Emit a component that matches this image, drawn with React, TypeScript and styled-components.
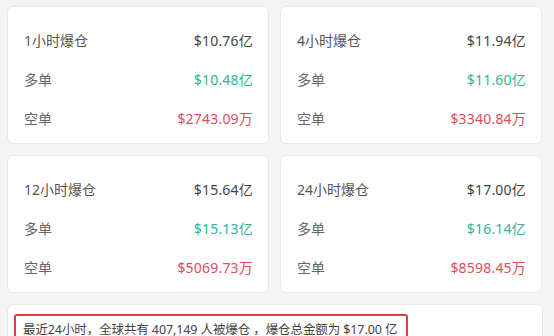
import styled, { createGlobalStyle } from 'styled-components'

const GlobalStyle = createGlobalStyle`
  html, body {
    margin: 0;
    padding: 0;
    background: #f4f4f5;
  }
  body {
    font-family: "Noto Sans", "Noto Sans CJK SC", sans-serif;
  }
`

const Page = styled.main`
  width: 554px;
  height: 336px;
  overflow: hidden;
  box-sizing: border-box;
  padding: 6px 11px 0 7px;
  display: flex;
  flex-direction: column;
  gap: 11px;
`

const Grid = styled.div`
  display: grid;
  grid-template-columns: 262px 262px;
  column-gap: 11px;
  row-gap: 11px;
`

const Card = styled.section`
  background: #fff;
  border: 1px solid #e9e9ec;
  border-radius: 6px;
  box-sizing: border-box;
  height: 138px;
  padding: 23px 15px 0 16px;
  display: flex;
  flex-direction: column;
  gap: 19px;
`

const Row = styled.div`
  display: flex;
  justify-content: space-between;
  align-items: center;
  height: 20px;
  font-size: 14px;
`

const Label = styled.span<{ $title?: boolean }>`
  color: ${p => (p.$title ? '#555' : '#666')};
`

const Value = styled.span<{ $tone: 'total' | 'long' | 'short' }>`
  color: ${p =>
    p.$tone === 'long' ? '#2fb597' : p.$tone === 'short' ? '#e24c5a' : '#444'};
  letter-spacing: 0.2px;
`

const Summary = styled.section`
  background: #fff;
  border: 1px solid #e9e9ec;
  border-radius: 6px;
  padding: 9px 0 0 6px;
  height: 40px;
`

const Notice = styled.div`
  width: 394px;
  box-sizing: border-box;
  border: 2px solid #d8403c;
  border-radius: 3px;
  padding: 3px 0 0 7px;
  height: 30px;
  font-size: 12.5px;
  letter-spacing: -0.1px;
  color: #444;
  white-space: nowrap;
`

type Stat = {
  title: string
  total: string
  long: string
  short: string
}

const stats: Stat[] = [
  { title: '1小时爆仓', total: '$10.76亿', long: '$10.48亿', short: '$2743.09万' },
  { title: '4小时爆仓', total: '$11.94亿', long: '$11.60亿', short: '$3340.84万' },
  { title: '12小时爆仓', total: '$15.64亿', long: '$15.13亿', short: '$5069.73万' },
  { title: '24小时爆仓', total: '$17.00亿', long: '$16.14亿', short: '$8598.45万' },
]

export default function App() {
  return (
    <>
      <GlobalStyle />
      <Page>
        <Grid>
          {stats.map(s => (
            <Card key={s.title}>
              <Row>
                <Label $title>{s.title}</Label>
                <Value $tone="total">{s.total}</Value>
              </Row>
              <Row>
                <Label>多单</Label>
                <Value $tone="long">{s.long}</Value>
              </Row>
              <Row>
                <Label>空单</Label>
                <Value $tone="short">{s.short}</Value>
              </Row>
            </Card>
          ))}
        </Grid>
        <Summary>
          <Notice>最近24小时，全球共有 407,149 人被爆仓 ，爆仓总金额为 $17.00 亿</Notice>
        </Summary>
      </Page>
    </>
  )
}
